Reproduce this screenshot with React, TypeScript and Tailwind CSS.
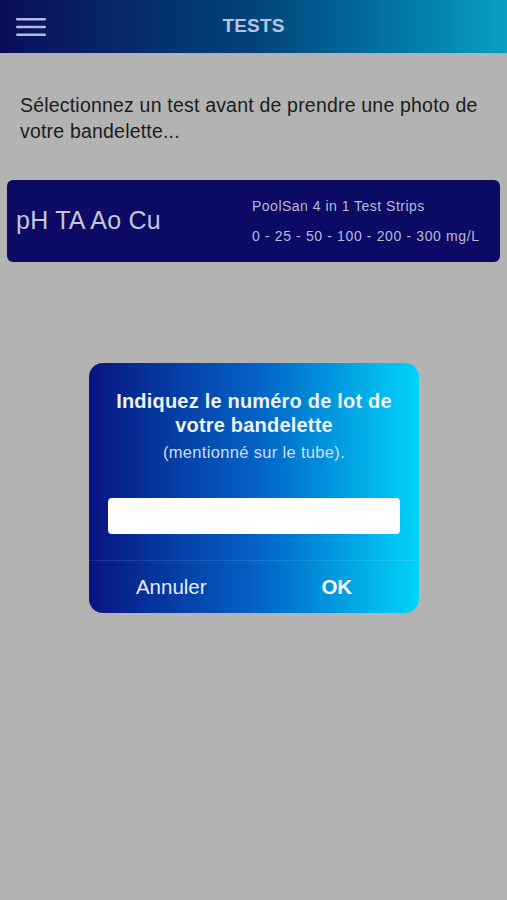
import { useState } from "react";

function MenuIcon() {
  return (
    <svg width="30" height="18" viewBox="0 0 30 18" aria-hidden="true">
      <rect x="0" y="0" width="30" height="2.6" rx="1.3" fill="#b4b9e0" />
      <rect x="0" y="7.7" width="30" height="2.6" rx="1.3" fill="#b4b9e0" />
      <rect x="0" y="15.4" width="30" height="2.6" rx="1.3" fill="#b4b9e0" />
    </svg>
  );
}

export default function App() {
  const [lot, setLot] = useState("");

  return (
    <div
      className="relative h-[900px] w-full overflow-hidden bg-[#b3b3b3]"
      style={{ fontFamily: '"Liberation Sans", Arial, sans-serif' }}
    >
      <header className="relative flex h-[54px] items-center justify-center border-b border-[#9bb4c8] bg-gradient-to-r from-[#0a0b5a] via-[#03437c] to-[#0aa0bf]">
        <button type="button" aria-label="Open menu" className="absolute left-4 top-[18px]">
          <MenuIcon />
        </button>
        <h1 className="text-[19px] font-bold tracking-[0.01em] text-[#b7c4dc]">TESTS</h1>
      </header>

      <p className="px-5 pt-[38px] text-[19.5px] leading-[26px] tracking-[0.01em] text-[#1c1c1c]">
        Sélectionnez un test avant de prendre une photo de votre bandelette...
      </p>

      <div className="mx-[7px] mt-[36px] flex h-[82px] items-center rounded-[6px] bg-[#0b0b66] pl-[9px] pr-3">
        <span className="w-[236px] text-[25px] tracking-[0.01em] text-[#c6c6d6]">pH TA Ao Cu</span>
        <div className="flex flex-col gap-[12px] text-[14px] leading-[18px] tracking-[0.035em] text-[#b8bad6]">
          <span>PoolSan 4 in 1 Test Strips</span>
          <span className="tracking-[0.045em]">0 - 25 - 50 - 100 - 200 - 300 mg/L</span>
        </div>
      </div>

      <div className="absolute left-[89px] top-[363px] w-[330px] overflow-hidden rounded-[14px] bg-gradient-to-r from-[#0a1282] via-[#0660c4] to-[#00d4fa] text-center text-white">
        <div className="px-3 pt-[26px]">
          <h2 className="text-[20px] font-bold leading-[24px] tracking-[0.01em] text-[#eef2fa]">
            Indiquez le numéro de lot de votre bandelette
          </h2>
          <p className="mt-[5px] text-[16.5px] leading-[20px] tracking-[0.02em] text-[#d2def5]">
            (mentionné sur le tube).
          </p>
        </div>
        <div className="px-[19px] pb-[26px] pt-[36px]">
          <input
            value={lot}
            onChange={(e) => setLot(e.target.value)}
            className="block h-[36px] w-full rounded-[4px] bg-white px-2 text-[15px] text-black outline-none"
          />
        </div>
        <div className="flex h-[53px] border-t border-white/10">
          <button type="button" className="flex-1 text-[20.5px] text-[#e8eefa]">
            Annuler
          </button>
          <div className="w-px bg-white/5" />
          <button type="button" className="flex-1 text-[20.5px] font-bold text-white">
            OK
          </button>
        </div>
      </div>
    </div>
  );
}
